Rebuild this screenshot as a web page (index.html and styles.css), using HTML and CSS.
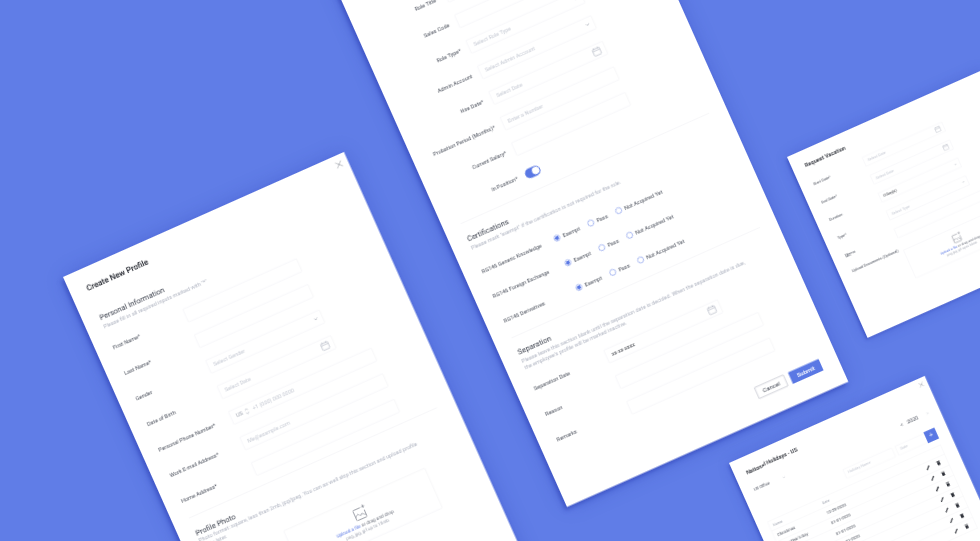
FILE: index.html
```html
<!DOCTYPE html>
<html lang="en">
<head>
    <meta charset="UTF-8">
    <meta name="viewport" content="width=device-width, initial-scale=1.0">
    <title>HR forms</title>
    <link rel="stylesheet" href="styles.css">
</head>
<body>
    <svg class="sprites" xmlns="http://www.w3.org/2000/svg">
        <symbol id="i-calendar" viewBox="0 0 18 18"><rect x="1.5" y="2.5" width="15" height="14" rx="1.5" fill="none" stroke="currentColor" stroke-width="1.4"/><path d="M1.5 6.5h15M5 1v3M13 1v3" fill="none" stroke="currentColor" stroke-width="1.4"/></symbol>
        <symbol id="i-chevron" viewBox="0 0 10 6"><path d="M1 1l4 4 4-4" fill="none" stroke="currentColor" stroke-width="1.6"/></symbol>
        <symbol id="i-close" viewBox="0 0 14 14"><path d="M1 1l12 12M13 1L1 13" fill="none" stroke="currentColor" stroke-width="1.5"/></symbol>
        <symbol id="i-updown" viewBox="0 0 8 14"><path d="M1 5l3-3.5L7 5M1 9l3 3.5L7 9" fill="none" stroke="currentColor" stroke-width="1.2"/></symbol>
        <symbol id="i-image" viewBox="0 0 30 30"><path d="M19 5H5a2 2 0 0 0-2 2v18a2 2 0 0 0 2 2h18a2 2 0 0 0 2-2V12M3 21l6-6 5 5 4-3 7 6" fill="none" stroke="currentColor" stroke-width="1.6"/><path d="M25 1v7M21.5 4.500h7" fill="none" stroke="currentColor" stroke-width="1.6"/></symbol>
        <symbol id="i-pencil" viewBox="0 0 14 14"><path d="M2 12L12 2" fill="none" stroke="currentColor" stroke-width="3.4"/></symbol>
        <symbol id="i-trash" viewBox="0 0 14 14"><path d="M2 1h10v2H2zM3 4h8v9H3z" fill="currentColor"/></symbol>
    </svg>

    <div class="desk">
        <!-- Create New Profile -->
        <section class="window window-profile">
            <svg class="close"><use href="#i-close"/></svg>
            <h1 class="title">Create New Profile</h1>
            <h2 class="heading heading-first">Personal Information</h2>
            <p class="hint">Please fill in all required inputs marked with "*"</p>
            <div class="rows">
                <div class="row"><span class="label">First Name*</span><div class="field"></div></div>
                <div class="row"><span class="label">Last Name*</span><div class="field"></div></div>
                <div class="row"><span class="label">Gender</span><div class="field"><span class="placeholder">Select Gender</span><svg class="chevron"><use href="#i-chevron"/></svg></div></div>
                <div class="row"><span class="label">Date of Birth</span><div class="field"><span class="placeholder">Select Date</span><svg class="calendar"><use href="#i-calendar"/></svg></div></div>
                <div class="row"><span class="label">Personal Phone Number*</span><div class="field field-wide field-phone"><span class="value-soft">US</span><svg class="updown"><use href="#i-updown"/></svg><span class="placeholder">+1 (000) 000 0000</span></div></div>
                <div class="row"><span class="label">Work E-mail Address*</span><div class="field field-wide"><span class="placeholder">Me@example.com</span></div></div>
                <div class="row"><span class="label">Home Address*</span><div class="field field-wide"></div></div>
            </div>
            <hr class="divider">
            <h2 class="heading">Profile Photo</h2>
            <p class="hint hint-tight">Photo format: square, less than 2mb, jpg/jpeg. You can as well skip this section and upload profile<br>photo later.</p>
            <div class="row upload-row">
                <span class="label"></span>
                <div class="upload">
                    <svg class="upload-icon"><use href="#i-image"/></svg>
                    <p class="upload-text"><span class="link">Upload a file</span> or drag and drop</p>
                    <p class="upload-note">png, jpg, gif up to 10mb</p>
                </div>
            </div>
        </section>

        <!-- Role, certifications and separation -->
        <section class="window window-role">
            <div class="rows rows-right">
                <div class="row"><span class="label">Role Title*</span><div class="field"></div></div>
                <div class="row"><span class="label">Sales Code</span><div class="field"></div></div>
                <div class="row"><span class="label">Role Type*</span><div class="field"><span class="placeholder">Select Role Type</span><svg class="chevron"><use href="#i-chevron"/></svg></div></div>
                <div class="row"><span class="label">Admin Account</span><div class="field"><span class="placeholder">Select Admin Account</span><svg class="chevron"><use href="#i-chevron"/></svg></div></div>
                <div class="row"><span class="label">Hire Date*</span><div class="field"><span class="placeholder">Select Date</span><svg class="calendar"><use href="#i-calendar"/></svg></div></div>
                <div class="row"><span class="label">Probation Period (Months)*</span><div class="field"><span class="placeholder">Enter a Number</span></div></div>
                <div class="row"><span class="label">Current Salary*</span><div class="field"></div></div>
                <div class="row"><span class="label">In Position*</span><div class="toggle"><span class="knob"></span></div></div>
            </div>
            <hr class="divider">
            <h2 class="heading">Certifications</h2>
            <p class="hint">Please mark "exempt" if the certification is not required for the role.</p>
            <div class="rows rows-cert">
                <div class="row"><span class="label">RG146 Generic Knowledge</span><div class="radios"><span class="option"><i class="radio radio-on"></i>Exempt</span><span class="option"><i class="radio"></i>Pass</span><span class="option"><i class="radio"></i>Not Acquired Yet</span></div></div>
                <div class="row"><span class="label">RG146 Foreign Exchange</span><div class="radios"><span class="option"><i class="radio radio-on"></i>Exempt</span><span class="option"><i class="radio"></i>Pass</span><span class="option"><i class="radio"></i>Not Acquired Yet</span></div></div>
                <div class="row"><span class="label">RG146 Derivatives</span><div class="radios"><span class="option"><i class="radio radio-on"></i>Exempt</span><span class="option"><i class="radio"></i>Pass</span><span class="option"><i class="radio"></i>Not Acquired Yet</span></div></div>
            </div>
            <hr class="divider">
            <h2 class="heading">Separation</h2>
            <p class="hint">Please leave this section blank until the separation date is decided. When the separation date is due,<br>the employee's profile will be marked inactive.</p>
            <div class="rows rows-sep">
                <div class="row"><span class="label">Separation Date</span><div class="field"><span class="value">xx-xx-xxxx</span><svg class="calendar"><use href="#i-calendar"/></svg></div></div>
                <div class="row"><span class="label">Reason</span><div class="field field-wide"></div></div>
                <div class="row"><span class="label">Remarks</span><div class="field field-wide"></div></div>
            </div>
            <div class="actions">
                <button class="btn btn-cancel">Cancel</button>
                <button class="btn btn-submit">Submit</button>
            </div>
        </section>

        <!-- Request Vacation -->
        <section class="window window-vacation">
            <h1 class="title">Request Vacation</h1>
            <div class="rows">
                <div class="row"><span class="label">Start Date*</span><div class="field"><span class="placeholder">Select Date</span><svg class="calendar"><use href="#i-calendar"/></svg></div></div>
                <div class="row"><span class="label">End Date*</span><div class="field"><span class="placeholder">Select Date</span><svg class="calendar"><use href="#i-calendar"/></svg></div></div>
                <div class="row"><span class="label">Duration</span><div class="field"><span class="value">0 Day(s)</span><svg class="chevron"><use href="#i-chevron"/></svg></div></div>
                <div class="row"><span class="label">Type*</span><div class="field"><span class="placeholder">Select Type</span><svg class="chevron"><use href="#i-chevron"/></svg></div></div>
                <div class="row"><span class="label">Memo</span><div class="field field-wide"></div></div>
                <div class="row upload-row-top">
                    <span class="label">Upload Documents (Optional)</span>
                    <div class="upload">
                        <svg class="upload-icon"><use href="#i-image"/></svg>
                        <p class="upload-text"><span class="link">Upload a file</span> or drag and drop</p>
                        <p class="upload-note">png, jpg, gif up to 10mb</p>
                    </div>
                </div>
            </div>
        </section>

        <!-- National Holidays -->
        <section class="window window-holidays">
            <svg class="close"><use href="#i-close"/></svg>
            <h1 class="title">National Holidays - US</h1>
            <div class="holiday-bar">
                <div class="office"><span class="office-name">US Office</span><svg class="chevron"><use href="#i-chevron"/></svg></div>
                <div class="year"><span class="year-arrow">&lt;</span><span>2020</span><span class="year-arrow year-arrow-off">&gt;</span></div>
            </div>
            <div class="holiday-add">
                <div class="field field-name"><span class="placeholder">Holiday Name</span></div>
                <div class="field field-date"><span class="placeholder">Date</span></div>
                <button class="btn-add">+</button>
            </div>
            <table class="holidays">
                <thead><tr><th>Name</th><th colspan="3">Date</th></tr></thead>
                <tbody>
                    <tr><td>Christmas</td><td>12-25-2020</td><td class="act"><svg class="tool"><use href="#i-pencil"/></svg></td><td class="act"><svg class="tool"><use href="#i-trash"/></svg></td></tr>
                    <tr><td>New Year's Day</td><td>01-01-2020</td><td class="act"><svg class="tool"><use href="#i-pencil"/></svg></td><td class="act"><svg class="tool"><use href="#i-trash"/></svg></td></tr>
                    <tr><td>New Year's Day</td><td>01-01-2020</td><td class="act"><svg class="tool"><use href="#i-pencil"/></svg></td><td class="act"><svg class="tool"><use href="#i-trash"/></svg></td></tr>
                    <tr><td>New Year's Day</td><td>01-01-2020</td><td class="act"><svg class="tool"><use href="#i-pencil"/></svg></td><td class="act"><svg class="tool"><use href="#i-trash"/></svg></td></tr>
                    <tr><td>New Year's Day</td><td>01-01-2020</td><td class="act"><svg class="tool"><use href="#i-pencil"/></svg></td><td class="act"><svg class="tool"><use href="#i-trash"/></svg></td></tr>
                    <tr><td>New Year's Day</td><td>01-01-2020</td><td class="act"><svg class="tool"><use href="#i-pencil"/></svg></td><td class="act"><svg class="tool"><use href="#i-trash"/></svg></td></tr>
                    <tr><td>New Year's Day</td><td>01-01-2020</td><td class="act"><svg class="tool"><use href="#i-pencil"/></svg></td><td class="act"><svg class="tool"><use href="#i-trash"/></svg></td></tr>
                </tbody>
            </table>
        </section>
    </div>
</body>
</html>
```

FILE: styles.css
```css
* {
    box-sizing: border-box;
}

html,
body {
    margin: 0;
    height: 100%;
}

body {
    background-color: #607de7;
    font-family: Roboto, "Liberation Sans", sans-serif;
    color: #3f4450;
    overflow: hidden;
    text-rendering: geometricPrecision;
}

.sprites {
    display: none;
}

/* Free canvas the tilted windows lie on */
.desk {
    position: relative;
    width: 980px;
    height: 541px;
    overflow: hidden;
}

.window {
    position: absolute;
    width: 612px;
    background-color: #fff;
    padding: 0 38px 0 34px;
    box-shadow: -6px 5px 8px rgba(44, 64, 178, 0.55), 0 0 40px rgba(44, 64, 178, 0.3);
    filter: blur(0.25px);
}

.window-profile {
    left: 63px;
    top: 277px;
    width: 615px;
    padding-top: 31px;
    height: 1100px;
    transform-origin: 0 0;
    transform: rotate(-24deg) scale(0.5);
}

.window-role {
    left: 567px;
    bottom: 34px;
    width: 616px;
    padding: 100px 36px 41px 36px;
    transform-origin: 0 100%;
    transform: rotate(-24deg) scale(0.5);
}

.window-vacation {
    left: 787px;
    top: 157px;
    height: 566px;
    padding-top: 34px;
    padding-left: 37px;
    transform-origin: 0 0;
    transform: rotate(-24deg) scale(0.35);
}

.window-holidays {
    left: 729px;
    top: 463px;
    height: 900px;
    padding: 35px 38px 0 34px;
    transform-origin: 0 0;
    transform: rotate(-24deg) scale(0.35);
}

.close {
    position: absolute;
    top: 12px;
    right: 12px;
    width: 14px;
    height: 14px;
    color: #8d919b;
}

.title {
    margin: 0;
    font-size: 16px;
    line-height: 20px;
    font-weight: 500;
    color: #23262e;
}

.heading {
    margin: 23px 0 0;
    font-size: 15px;
    line-height: 18px;
    font-weight: 400;
    color: #3f4450;
}

.heading-first {
    margin-top: 44px;
}

.hint {
    margin: 4px 0 0;
    font-size: 11px;
    line-height: 14px;
    color: #aeb3c0;
}

.hint-tight {
    margin-top: 0;
}

.divider {
    margin: 22px 0 0;
    border: 0;
    border-top: 1.5px solid #efeff3;
}

/* Form rows */
.rows {
    display: grid;
    row-gap: 27px;
    margin-top: 25px;
}

.window-vacation .rows {
    margin-top: 34px;
}

.row {
    display: grid;
    grid-template-columns: 158px auto;
    justify-content: start;
    align-items: center;
    min-height: 29px;
}

.label {
    font-size: 11px;
    line-height: 14px;
    white-space: nowrap;
    color: #4b505c;
}

.rows-right {
    margin-top: 0;
}

.rows-right .label {
    text-align: right;
    padding-right: 17px;
}

.rows-cert {
    row-gap: 25px;
    margin-top: 30px;
}

.rows-sep {
    margin-top: 24px;
}

.field {
    display: flex;
    align-items: center;
    justify-content: space-between;
    width: 250px;
    height: 29px;
    padding: 0 9px 0 11px;
    border: 1.5px solid #efeff3;
    border-radius: 2px;
    background-color: #fff;
}

.field-wide {
    width: 314px;
}

.field-phone {
    justify-content: flex-start;
}

.placeholder {
    font-size: 11px;
    white-space: nowrap;
    color: #c6cad4;
}

.value {
    font-size: 11px;
    color: #2b2e36;
}

.value-soft {
    font-size: 11px;
    color: #a0a5b1;
}

.updown {
    width: 8px;
    height: 14px;
    margin: 0 9px 0 5px;
    color: #a0a5b1;
}

.chevron {
    width: 8px;
    height: 5px;
    color: #9a9fac;
}

.calendar {
    width: 18px;
    height: 18px;
    color: #b9bdc8;
}

/* Toggle */
.toggle {
    display: flex;
    justify-content: flex-end;
    align-items: center;
    width: 32px;
    height: 20px;
    padding: 2px;
    border-radius: 10px;
    background-color: #5a78e4;
}

.knob {
    width: 15px;
    height: 15px;
    border-radius: 50%;
    background-color: #fff;
}

/* Radios */
.radios {
    display: flex;
    align-items: center;
    gap: 18px;
}

.option {
    display: flex;
    align-items: center;
    gap: 6px;
    font-size: 11px;
    white-space: nowrap;
    color: #4b505c;
}

.radio {
    width: 13px;
    height: 13px;
    border: 1.5px solid #5a78e4;
    border-radius: 50%;
}

.radio-on {
    background: radial-gradient(circle, #5a78e4 0 3.5px, #fff 4px);
}

/* Upload box */
.upload-row {
    margin-top: 30px;
}

.upload-row .upload {
    margin-left: 4px;
}

.upload-row-top {
    align-items: start;
}

.upload-row-top .upload {
    margin-top: 10px;
}

.upload {
    display: flex;
    flex-direction: column;
    align-items: center;
    justify-content: center;
    width: 310px;
    height: 88px;
    border: 1.5px solid #efeff3;
    border-radius: 2px;
}

.upload-icon {
    width: 30px;
    height: 30px;
    color: #8d919b;
}

.upload-text {
    margin: 3px 0 0;
    font-size: 9.5px;
    line-height: 13px;
    color: #6a6f7b;
}

.upload-note {
    margin: 0;
    font-size: 9px;
    line-height: 12px;
    color: #a0a5b1;
}

.link {
    color: #5a78e4;
}

/* Buttons */
.actions {
    display: flex;
    justify-content: flex-end;
    gap: 10px;
    margin-top: 50px;
}

.btn {
    height: 25px;
    padding: 0;
    width: 64px;
    font-family: inherit;
    font-size: 12px;
    border-radius: 1px;
}

.btn-cancel {
    border: 1.5px solid #a6abb6;
    background-color: #fff;
    color: #3f4450;
}

.btn-submit {
    width: 67px;
    border: 0;
    background-color: #5a78e4;
    color: #fff;
    font-weight: 500;
}

/* Holidays */
.holiday-bar {
    display: flex;
    justify-content: space-between;
    align-items: center;
    margin: 36px -6px 0 0;
}

.office {
    display: flex;
    align-items: center;
    gap: 40px;
}

.office-name {
    font-size: 12px;
    color: #4b505c;
}

.year {
    display: flex;
    gap: 13px;
    font-size: 15px;
    color: #4b505c;
}

.year-arrow-off {
    margin-left: 13px;
    color: #dcdee4;
}

.holiday-add {
    display: flex;
    justify-content: flex-end;
    align-items: center;
    gap: 9px;
    margin: 37px -3px 0 0;
}

.field-name {
    width: 154px;
}

.field-date {
    width: 92px;
    margin-right: -10px;
}

.btn-add {
    width: 34px;
    height: 34px;
    padding: 0;
    border: 0;
    background-color: #5a78e4;
    color: #fff;
    font-size: 20px;
    line-height: 30px;
}

.holidays {
    width: 543px;
    margin: 19px 0 0 -3px;
    border: 1.5px solid #efeff3;
    border-collapse: collapse;
    font-size: 12px;
    color: #4b505c;
}

.holidays th {
    height: 28px;
    padding: 0 0 0 11px;
    font-weight: 400;
    font-size: 10.5px;
    text-align: left;
    color: #a0a5b1;
}

.holidays td {
    height: 33px;
    padding: 0 0 0 11px;
    border-top: 1.5px solid #efeff3;
}

.holidays td:first-child {
    width: 154px;
}

.holidays td.act {
    width: 34px;
    padding: 0;
}

.holidays td.act:last-child {
    width: 43px;
    padding-right: 9px;
}

.tool {
    display: block;
    width: 14px;
    height: 14px;
    margin: 0 auto;
    color: #2b2e36;
}
```
